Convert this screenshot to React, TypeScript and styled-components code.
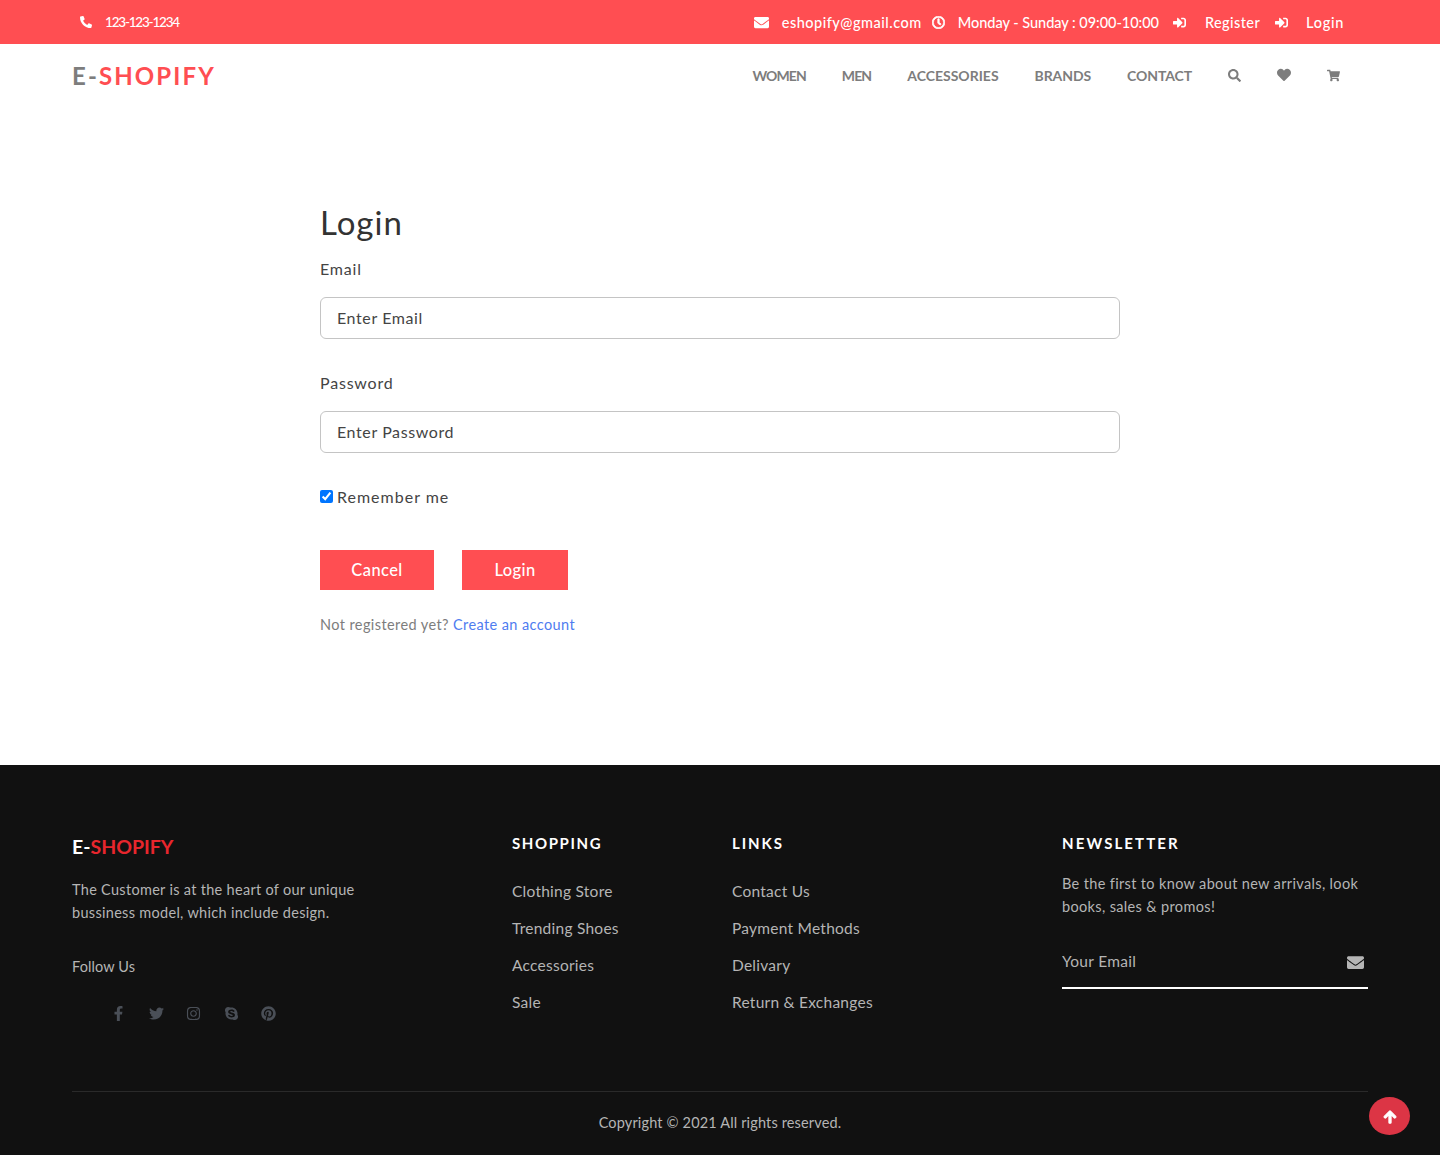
import React from 'react';
import styled, { createGlobalStyle } from 'styled-components';
import {
  FaPhoneAlt, FaEnvelope, FaRegClock, FaSignInAlt, FaSearch, FaHeart, FaShoppingCart,
  FaFacebookF, FaTwitter, FaInstagram, FaSkype, FaPinterest, FaArrowUp,
} from 'react-icons/fa';

const font = `Lato, 'Noto Sans', sans-serif`;

const navItems = [
  { label: 'WOMEN', spacing: -0.9 },
  { label: 'MEN', spacing: -0.9 },
  { label: 'ACCESSORIES', spacing: 0 },
  { label: 'BRANDS', spacing: -0.1 },
  { label: 'CONTACT', spacing: -0.1 },
];
const shopping = ['Clothing Store', 'Trending Shoes', 'Accessories', 'Sale'];
const links = ['Contact Us', 'Payment Methods', 'Delivary', 'Return & Exchanges'];
const socials = [FaFacebookF, FaTwitter, FaInstagram, FaSkype, FaPinterest];

const App: React.FC = () => {
  return (
    <>
      <GlobalStyle />
      <TopBar>
        <PhoneItem $iconGap={13} $spacing={-1.2}><FaPhoneAlt size={12} />123-123-1234</PhoneItem>
        <TopRight>
          <TopItem $iconGap={13} $spacing={0.5} $after={10}><FaEnvelope size={15} />eshopify@gmail.com</TopItem>
          <TopItem $iconGap={13} $spacing={-0.03} $after={14}><ClockIcon size={13} />Monday - Sunday : 09:00-10:00</TopItem>
          <TopItem $iconGap={19} $spacing={0.4} $after={15}><FaSignInAlt size={13} />Register</TopItem>
          <TopItem $iconGap={18} $spacing={0.7} $after={0}><FaSignInAlt size={13} />Login</TopItem>
        </TopRight>
      </TopBar>

      <Header>
        <Logo>E-<span>SHOPIFY</span></Logo>
        <Nav>
          {navItems.map((item) => <NavLink key={item.label} $spacing={item.spacing}>{item.label}</NavLink>)}
          <NavIcon><FaSearch size={13} /></NavIcon>
          <NavIcon><FaHeart size={14} /></NavIcon>
          <NavIcon><FaShoppingCart size={13} /></NavIcon>
        </Nav>
      </Header>

      <Main>
        <Title>Login</Title>
        <Label>Email</Label>
        <Input placeholder="Enter Email" />
        <Label>Password</Label>
        <Input placeholder="Enter Password" />
        <Remember>
          <Check type="checkbox" defaultChecked />
          Remember me
        </Remember>
        <Buttons>
          <Button $width={114}>Cancel</Button>
          <Button $width={106}>Login</Button>
        </Buttons>
        <Signup>Not registered yet? <a href="#">Create an account</a></Signup>
      </Main>

      <Footer>
        <Columns>
          <div>
            <FooterLogo>E-<span>SHOPIFY</span></FooterLogo>
            <About>The Customer is at the heart of our unique<br />bussiness model, which include design.</About>
            <FollowUs>Follow Us</FollowUs>
            <Socials>
              {socials.map((Icon, i) => <SocialIcon key={i}><Icon size={15} /></SocialIcon>)}
            </Socials>
          </div>
          <div>
            <ColumnTitle $spacing={1.6}>SHOPPING</ColumnTitle>
            <LinkList>{shopping.map((s) => <li key={s}>{s}</li>)}</LinkList>
          </div>
          <div>
            <ColumnTitle $spacing={1.9}>LINKS</ColumnTitle>
            <LinkList>{links.map((s) => <li key={s}>{s}</li>)}</LinkList>
          </div>
          <div>
            <ColumnTitle $spacing={2.1}>NEWSLETTER</ColumnTitle>
            <NewsText>Be the first to know about new arrivals, look<br />books, sales &amp; promos!</NewsText>
            <NewsForm>
              <NewsInput placeholder="Your Email" />
              <NewsIcon size={17} />
            </NewsForm>
          </div>
        </Columns>
        <Copyright>Copyright © 2021 All rights reserved.</Copyright>
      </Footer>

      <ScrollTop><ArrowIcon size={14} /></ScrollTop>
    </>
  );
};

export default App;

const GlobalStyle = createGlobalStyle`
  * { box-sizing: border-box; }
  body {
    margin: 0;
    background: #fff;
    font-family: ${font};
  }
`;

const TopBar = styled.div`
  display: flex;
  align-items: center;
  justify-content: space-between;
  height: 44px;
  padding: 0 96px 0 80px;
  background: #ff4e52;
  color: #fff;
  font-size: 14.5px;
  font-weight: 500;
`;

const TopRight = styled.div`
  display: flex;
  align-items: center;
`;

const TopItem = styled.div<{ $iconGap: number; $spacing: number; $after?: number }>`
  display: flex;
  align-items: center;
  gap: ${({ $iconGap }) => $iconGap}px;
  margin-right: ${({ $after }) => $after ?? 0}px;
  letter-spacing: ${({ $spacing }) => $spacing}px;
  white-space: nowrap;
`;

const PhoneItem = styled(TopItem)`
  font-size: 13.5px;
`;

const ClockIcon = styled(FaRegClock)`
  stroke: currentColor;
  stroke-width: 30px;
`;

const Header = styled.header`
  display: flex;
  align-items: center;
  justify-content: space-between;
  height: 64px;
  padding: 0 100px 2px 72px;
`;

const Logo = styled.div`
  color: #7d7d7d;
  font-size: 24px;
  font-weight: 700;
  letter-spacing: 2.1px;
  span { color: #ff4e52; }
`;

const Nav = styled.nav`
  display: flex;
  align-items: center;
  gap: 36px;
`;

const NavLink = styled.a<{ $spacing: number }>`
  color: #7d7d7d;
  font-size: 14px;
  font-weight: 700;
  letter-spacing: ${({ $spacing }) => $spacing}px;
`;

const NavIcon = styled.span`
  display: flex;
  color: #7d7d7d;
`;

const Main = styled.main`
  display: flex;
  flex-direction: column;
  align-items: flex-start;
  width: 800px;
  height: 657px;
  margin: 0 auto;
  padding-top: 94px;
`;

const Title = styled.h1`
  margin: 0 0 15px;
  color: #333;
  font-size: 33px;
  line-height: 40px;
  font-weight: 400;
  letter-spacing: 1px;
`;

const Label = styled.label`
  display: block;
  margin-bottom: 16px;
  color: #444;
  font-size: 16px;
  line-height: 24px;
  letter-spacing: 0.8px;
`;

const Input = styled.input`
  display: block;
  width: 100%;
  height: 42px;
  margin-bottom: 32px;
  padding: 0 16px 2px;
  border: 1px solid #c4c4c4;
  border-radius: 6px;
  outline: none;
  font-family: ${font};
  font-size: 16px;
  letter-spacing: 0.6px;
  &::placeholder { color: #444; opacity: 1; }
`;

const Remember = styled.label`
  display: flex;
  align-items: center;
  gap: 4px;
  color: #444;
  font-size: 16px;
  line-height: 24px;
  letter-spacing: 1px;
`;

const Check = styled.input`
  width: 13px;
  height: 13px;
  margin: 0 0 2px;
`;

const Buttons = styled.div`
  display: flex;
  gap: 28px;
  margin-top: 41px;
`;

const Button = styled.button<{ $width: number }>`
  width: ${({ $width }) => $width}px;
  height: 40px;
  padding: 0;
  border: none;
  background: #ff4e52;
  color: #fff;
  font-family: ${font};
  font-size: 16.5px;
  font-weight: 500;
  letter-spacing: 0.4px;
`;

const Signup = styled.p`
  margin: 25px 0 0;
  color: #7d7d7d;
  font-size: 14.5px;
  line-height: 20px;
  letter-spacing: 0.4px;
  a { color: #4f7cf0; text-decoration: none; }
`;

const Footer = styled.footer`
  height: 390px;
  padding: 0 72px;
  background: #111;
`;

const Columns = styled.div`
  display: grid;
  grid-template-columns: 440px 220px 330px 306px;
  height: 327px;
  padding-top: 69px;
  border-bottom: 1px solid #2a2a2a;
`;

const FooterLogo = styled.div`
  margin-top: 1px;
  color: #fff;
  font-size: 19.5px;
  line-height: 24px;
  font-weight: 700;
  span { color: #e8262d; }
`;

const About = styled.p`
  margin: 19px 0 0;
  color: #b5b5b5;
  font-size: 14.5px;
  line-height: 23px;
  letter-spacing: 0.3px;
`;

const FollowUs = styled.div`
  margin-top: 31px;
  color: #b5b5b5;
  font-size: 14.5px;
  line-height: 23px;
  letter-spacing: 0.1px;
`;

const Socials = styled.div`
  display: flex;
  gap: 22.5px;
  margin-top: 28px;
  padding-left: 39px;
`;

const SocialIcon = styled.span`
  display: flex;
  color: #4a4f57;
`;

const ColumnTitle = styled.h4<{ $spacing: number }>`
  margin: 0;
  color: #fff;
  font-size: 15px;
  line-height: 18px;
  font-weight: 700;
  letter-spacing: ${({ $spacing }) => $spacing}px;
`;

const LinkList = styled.ul`
  display: flex;
  flex-direction: column;
  gap: 14px;
  margin: 28px 0 0;
  padding: 0;
  list-style: none;
  li {
    color: #b5b5b5;
    font-size: 15.5px;
    line-height: 23px;
    letter-spacing: 0.25px;
  }
`;

const NewsText = styled.p`
  margin: 20px 0 0;
  color: #b5b5b5;
  font-size: 14.5px;
  line-height: 23px;
  letter-spacing: 0.35px;
`;

const NewsForm = styled.div`
  display: flex;
  align-items: center;
  justify-content: space-between;
  height: 48px;
  margin-top: 23px;
  padding: 0 4px 4px 0;
  border-bottom: 2px solid #fff;
`;

const NewsInput = styled.input`
  flex: 1;
  padding: 0 0 3px;
  border: none;
  outline: none;
  background: transparent;
  font-family: ${font};
  font-size: 15.5px;
  letter-spacing: 0.3px;
  &::placeholder { color: #b5b5b5; opacity: 1; }
`;

const NewsIcon = styled(FaEnvelope)`
  color: #b5b5b5;
`;

const Copyright = styled.div`
  margin-top: 21px;
  color: #b5b5b5;
  font-size: 14.5px;
  line-height: 20px;
  text-align: center;
  letter-spacing: 0.15px;
`;

const ScrollTop = styled.button`
  position: fixed;
  top: 1097px;
  left: 1369px;
  display: flex;
  align-items: center;
  justify-content: center;
  width: 41px;
  height: 38px;
  padding: 2px 0 0;
  border: none;
  border-radius: 50%;
  background: #dc3545;
  color: #fff;
`;

const ArrowIcon = styled(FaArrowUp)`
  stroke: currentColor;
  stroke-width: 40px;
`;
